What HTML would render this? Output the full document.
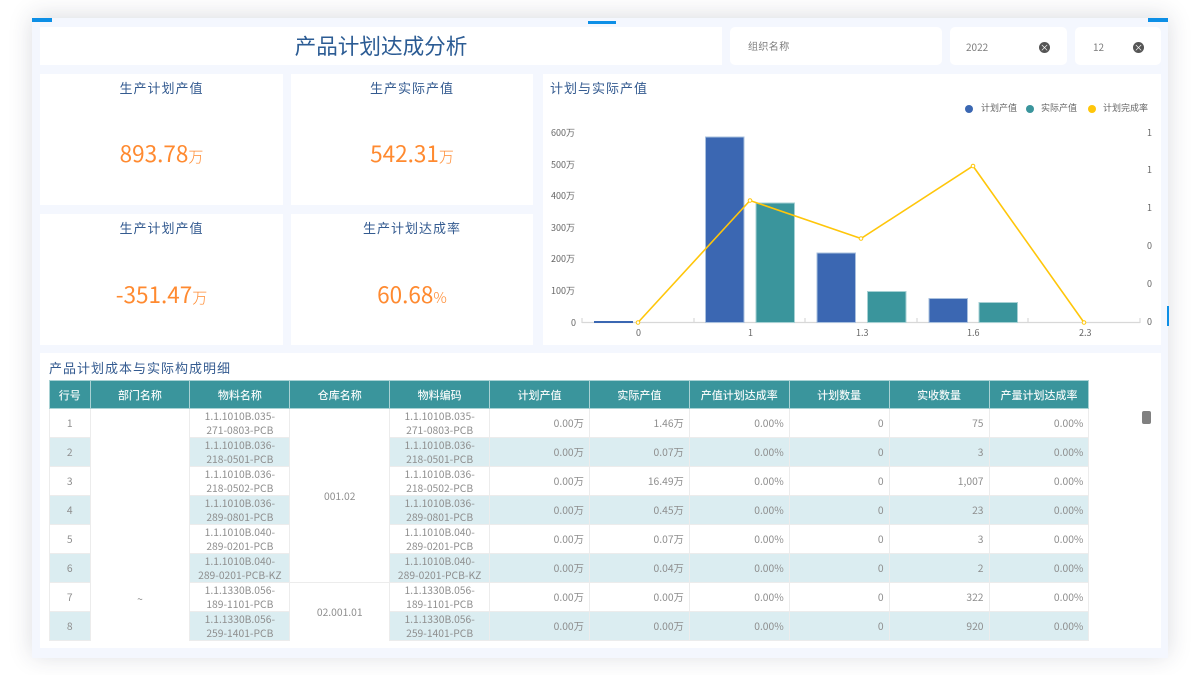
<!DOCTYPE html>
<html lang="zh"><head><meta charset="utf-8"><title>产品计划达成分析</title>
<style>
*{box-sizing:border-box;margin:0;padding:0}
html,body{width:1200px;height:675px;background:#fff;overflow:hidden;font-family:"Noto Sans CJK SC","Liberation Sans",sans-serif}
body{filter:blur(.3px)}
.a{position:absolute}
#frame{left:32px;top:18px;width:1136px;height:640px;background:#f4f7fe;box-shadow:0 -2px 22px rgba(40,50,70,.17)}
.p{position:absolute;background:#fff}
.t{position:absolute;color:#345b90;font-size:13px;letter-spacing:1px;line-height:18px;white-space:nowrap}
.ct{left:0;width:100%;text-align:center}
.v{position:absolute;left:0;width:100%;text-align:center;color:#ff8a30;font-size:22.5px;line-height:32px;white-space:nowrap;font-weight:400}
.v span{font-size:15px;font-weight:300}
.x{position:absolute;width:11px;height:11px;border-radius:50%;background:#555;color:#fff;font-size:9px;line-height:11px;text-align:center}
.f{position:absolute;font-size:10px;color:#7c7c7c;line-height:14px;white-space:nowrap}
.l{position:absolute;font-size:9px;color:#666;line-height:12px;white-space:nowrap}
.d{position:absolute;width:8px;height:8px;border-radius:50%}
table{position:absolute;left:49px;top:380px;width:1039.5px;table-layout:fixed;border-collapse:collapse;font-size:10.3px;color:#8e8e8e}
th{height:28px;background:#3a959c;color:#f2f8f8;font-weight:500;font-size:11px;border:1px solid #a9d2d4;text-align:center;padding:0}
td{height:29px;border:1px solid #ececec;text-align:center;line-height:14px;padding:0 1px;overflow:hidden;white-space:nowrap}
tr.e td{background:#dbedf1}
tr.e td.w,td.w{background:#fff}
td.r{text-align:right;padding-right:5px}
td.b{vertical-align:bottom;padding-bottom:35px}
td.w{border-bottom:none}
</style></head><body>
<div class="a" id="frame"></div>
<div class="a" style="left:32px;top:18px;width:20px;height:4px;background:#0d8fe6"></div>
<div class="a" style="left:588px;top:21px;width:28px;height:3px;background:#0d8fe6"></div>
<div class="a" style="left:1148px;top:18px;width:20px;height:4px;background:#0d8fe6"></div>
<div class="a" style="left:1167px;top:306px;width:2px;height:20px;background:#0d8fe6"></div>

<div class="p" style="left:40px;top:27px;width:682px;height:38px"><div class="a" style="left:0;width:100%;top:2px;text-align:center;color:#2c5c94;font-size:21.6px;line-height:34px;font-weight:400">产品计划达成分析</div></div>
<div class="p" style="left:730px;top:27px;width:212px;height:38px;border-radius:5px"></div>
<div class="f" style="left:748px;top:39px;letter-spacing:.4px">组织名称</div>
<div class="p" style="left:950px;top:27px;width:117px;height:38px;border-radius:5px"></div>
<div class="f" style="left:966px;top:40px">2022</div>
<div class="x" style="left:1039px;top:41.5px">×</div>
<div class="p" style="left:1075px;top:27px;width:86px;height:38px;border-radius:5px"></div>
<div class="f" style="left:1093px;top:40px">12</div>
<div class="x" style="left:1133px;top:41.5px">×</div>

<div class="p" style="left:40px;top:74px;width:243px;height:131px"><div class="t ct" style="top:5px">生产计划产值</div><div class="v" style="top:63px">893.78<span>万</span></div></div>
<div class="p" style="left:291px;top:74px;width:242px;height:131px"><div class="t ct" style="top:5px">生产实际产值</div><div class="v" style="top:63px">542.31<span>万</span></div></div>
<div class="p" style="left:40px;top:214px;width:243px;height:131px"><div class="t ct" style="top:5px">生产计划产值</div><div class="v" style="top:63.5px">-351.47<span>万</span></div></div>
<div class="p" style="left:291px;top:214px;width:242px;height:131px"><div class="t ct" style="top:5px">生产计划达成率</div><div class="v" style="top:63.5px">60.68<span>%</span></div></div>

<div class="p" style="left:543px;top:74px;width:618px;height:271px"></div>
<div class="t" style="left:550px;top:79px">计划与实际产值</div>
<div class="d" style="left:965px;top:105px;background:#3b67b2"></div><div class="l" style="left:981px;top:102px">计划产值</div>
<div class="d" style="left:1026px;top:105px;background:#3a959c"></div><div class="l" style="left:1041px;top:102px">实际产值</div>
<div class="d" style="left:1088px;top:105px;background:#ffc60a"></div><div class="l" style="left:1103px;top:102px">计划完成率</div>

<svg class="a" style="left:0;top:0" width="1200" height="675">
<path d="M582 322.500H1140M582 318v5M694 318v5M805 318v5M917 318v5M1028 318v5M1140 318v5" stroke="#d8d8d8" stroke-width="1.200" fill="none"/>
<g fill="#3b67b2" stroke="#a9c0de" stroke-width="1">
<rect x="594" y="321" width="39" height="2" stroke="none"/>
<rect x="705.5" y="137" width="38.5" height="185.500"/>
<rect x="817" y="253" width="38.500" height="69.500"/>
<rect x="929" y="298.500" width="38.500" height="24"/>
</g>
<g fill="#3a959c" stroke="#a6d0d3" stroke-width="1">
<rect x="756" y="203" width="38.500" height="119.500"/>
<rect x="867.500" y="291.500" width="38.500" height="31"/>
<rect x="979" y="302.500" width="38.500" height="20"/>
</g>
<polyline points="638,322.500 750,200.500 861,238.500 973,166 1084,322.500" fill="none" stroke="#ffc60a" stroke-width="1.600"/>
<g fill="#fff" stroke="#ffc60a" stroke-width="1">
<circle cx="638" cy="322.500" r="1.800"/><circle cx="750" cy="200.500" r="1.800"/><circle cx="861" cy="238.500" r="1.800"/><circle cx="973" cy="166" r="1.800"/><circle cx="1084" cy="322.500" r="1.800"/>
</g>
</svg>
<div class="l" style="left:551px;top:127px">600万</div>
<div class="l" style="left:551px;top:159px">500万</div>
<div class="l" style="left:551px;top:190px">400万</div>
<div class="l" style="left:551px;top:222px">300万</div>
<div class="l" style="left:551px;top:253px">200万</div>
<div class="l" style="left:551px;top:285px">100万</div>
<div class="l" style="left:571px;top:317px">0</div>
<div class="l" style="left:1147px;top:127px">1</div>
<div class="l" style="left:1147px;top:164px">1</div>
<div class="l" style="left:1147px;top:202px">1</div>
<div class="l" style="left:1147px;top:240px">0</div>
<div class="l" style="left:1147px;top:278px">0</div>
<div class="l" style="left:1147px;top:316px">0</div>
<div class="l" style="left:636px;top:327px">0</div>
<div class="l" style="left:748px;top:327px">1</div>
<div class="l" style="left:856px;top:327px">1.3</div>
<div class="l" style="left:967px;top:327px">1.6</div>
<div class="l" style="left:1079px;top:327px">2.3</div>

<div class="p" style="left:40px;top:353px;width:1121px;height:295px"></div>
<div class="t" style="left:49px;top:359px">产品计划成本与实际构成明细</div>
<div class="a" style="left:1142px;top:411px;width:9px;height:13px;background:#808080;border-radius:2px"></div>

<table>
<colgroup><col style="width:40.5px"><col span="10" style="width:99.9px"></colgroup>
<thead><tr><th>行号</th><th>部门名称</th><th>物料名称</th><th>仓库名称</th><th>物料编码</th><th>计划产值</th><th>实际产值</th><th>产值计划达成率</th><th>计划数量</th><th>实收数量</th><th>产量计划达成率</th></tr></thead>
<tbody>
<tr><td>1</td><td class="w b" rowspan="8">~</td><td>1.1.1010B.035-<br>271-0803-PCB</td><td rowspan="6" style="background:#fff">001.02</td><td>1.1.1010B.035-<br>271-0803-PCB</td><td class="r">0.00万</td><td class="r">1.46万</td><td class="r">0.00%</td><td class="r">0</td><td class="r">75</td><td class="r">0.00%</td></tr>
<tr class="e"><td>2</td><td>1.1.1010B.036-<br>218-0501-PCB</td><td>1.1.1010B.036-<br>218-0501-PCB</td><td class="r">0.00万</td><td class="r">0.07万</td><td class="r">0.00%</td><td class="r">0</td><td class="r">3</td><td class="r">0.00%</td></tr>
<tr><td>3</td><td>1.1.1010B.036-<br>218-0502-PCB</td><td>1.1.1010B.036-<br>218-0502-PCB</td><td class="r">0.00万</td><td class="r">16.49万</td><td class="r">0.00%</td><td class="r">0</td><td class="r">1,007</td><td class="r">0.00%</td></tr>
<tr class="e"><td>4</td><td>1.1.1010B.036-<br>289-0801-PCB</td><td>1.1.1010B.036-<br>289-0801-PCB</td><td class="r">0.00万</td><td class="r">0.45万</td><td class="r">0.00%</td><td class="r">0</td><td class="r">23</td><td class="r">0.00%</td></tr>
<tr><td>5</td><td>1.1.1010B.040-<br>289-0201-PCB</td><td>1.1.1010B.040-<br>289-0201-PCB</td><td class="r">0.00万</td><td class="r">0.07万</td><td class="r">0.00%</td><td class="r">0</td><td class="r">3</td><td class="r">0.00%</td></tr>
<tr class="e"><td>6</td><td>1.1.1010B.040-<br>289-0201-PCB-KZ</td><td>1.1.1010B.040-<br>289-0201-PCB-KZ</td><td class="r">0.00万</td><td class="r">0.04万</td><td class="r">0.00%</td><td class="r">0</td><td class="r">2</td><td class="r">0.00%</td></tr>
<tr><td>7</td><td>1.1.1330B.056-<br>189-1101-PCB</td><td class="w" rowspan="2">02.001.01</td><td>1.1.1330B.056-<br>189-1101-PCB</td><td class="r">0.00万</td><td class="r">0.00万</td><td class="r">0.00%</td><td class="r">0</td><td class="r">322</td><td class="r">0.00%</td></tr>
<tr class="e"><td>8</td><td>1.1.1330B.056-<br>259-1401-PCB</td><td>1.1.1330B.056-<br>259-1401-PCB</td><td class="r">0.00万</td><td class="r">0.00万</td><td class="r">0.00%</td><td class="r">0</td><td class="r">920</td><td class="r">0.00%</td></tr>
</tbody></table>
</body></html>
